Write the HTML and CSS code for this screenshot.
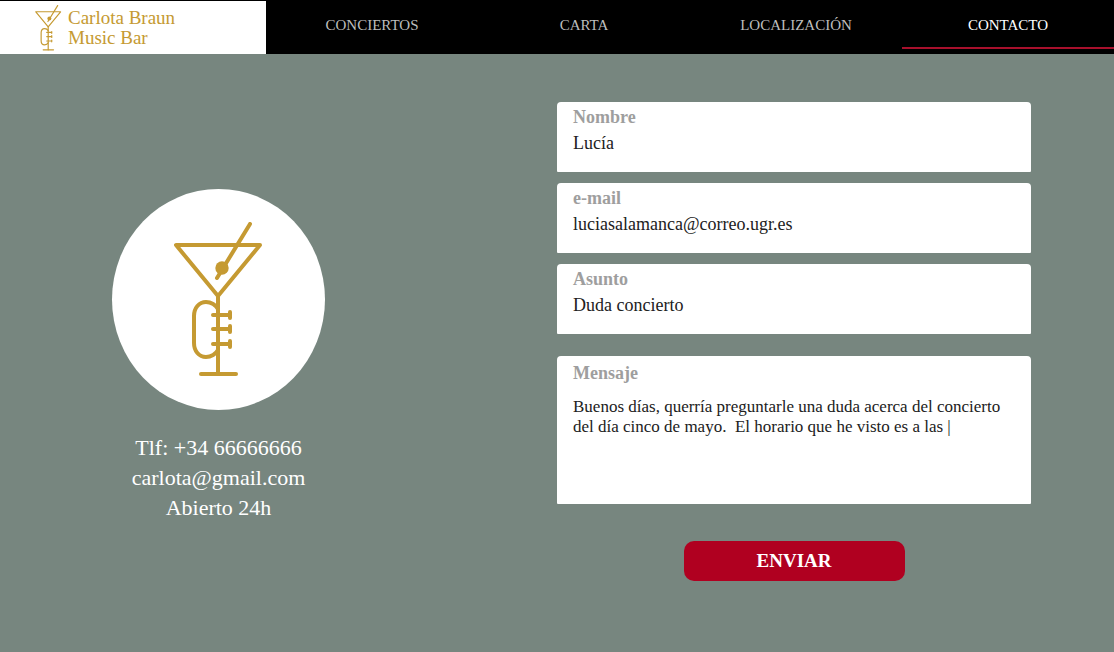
FILE: index.html
```html
<!DOCTYPE html>
<html lang="es">
<head>
<meta charset="utf-8">
<meta name="viewport" content="width=device-width, initial-scale=1">
<title>Carlota Braun Music Bar - Contacto</title>
<link rel="stylesheet" href="styles.css">
</head>
<body>
<svg class="sprite" aria-hidden="true">
  <symbol id="trumpet-glass" viewBox="0 0 90 156">
    <g fill="none" stroke="currentColor" stroke-width="4" stroke-linecap="round" stroke-linejoin="round">
      <path d="M2 23H86L44 74Z"/>
      <path d="M76 2L43 56"/>
      <path d="M44 74V152"/>
      <path d="M27 152H62"/>
      <path d="M44 87C42 83 37 80 32 80C25 80 20 86 20 94V121C20 129 25 135 32 135C37 135 42 132 44 128"/>
      <path d="M39 93H55M39 107H55M39 122H55"/>
      <path d="M56 90V96M56 104V110M56 119V125"/>
    </g>
    <circle cx="48" cy="46" r="6.700" fill="currentColor"/>
  </symbol>
</svg>
<header class="topbar">
  <a class="brand" href="#inicio">
    <svg class="brand-icon" aria-hidden="true"><use href="#trumpet-glass"/></svg>
    <span>Carlota Braun<br>Music Bar</span>
  </a>
  <nav class="tabs">
    <a class="tab" href="#conciertos">CONCIERTOS</a>
    <a class="tab" href="#carta">CARTA</a>
    <a class="tab" href="#localizacion">LOCALIZACIÓN</a>
    <a class="tab active" href="#contacto" aria-current="page">CONTACTO</a>
  </nav>
</header>
<main class="page">
  <section class="info">
    <div class="badge">
      <svg class="badge-icon" aria-hidden="true"><use href="#trumpet-glass"/></svg>
    </div>
    <address class="details">
      Tlf: +34 66666666<br>
      carlota@gmail.com<br>
      Abierto 24h
    </address>
  </section>
  <form class="form">
    <div class="field">
      <label for="nombre">Nombre</label>
      <input id="nombre" type="text" value="Lucía">
    </div>
    <div class="field">
      <label for="email">e-mail</label>
      <input id="email" type="email" value="luciasalamanca@correo.ugr.es">
    </div>
    <div class="field">
      <label for="asunto">Asunto</label>
      <input id="asunto" type="text" value="Duda concierto">
    </div>
    <div class="field message">
      <label for="mensaje">Mensaje</label>
      <textarea id="mensaje">Buenos días, querría preguntarle una duda acerca del concierto
del día cinco de mayo.  El horario que he visto es a las |</textarea>
    </div>
    <button class="send" type="submit">ENVIAR</button>
  </form>
</main>
</body>
</html>
```
FILE: styles.css
```css
* {
  box-sizing: border-box;
}

body {
  margin: 0;
  min-height: 100vh;
  background: #77867f;
  font-family: "Liberation Serif", "Times New Roman", serif;
}

.sprite {
  display: none;
}

.topbar {
  display: grid;
  grid-template-columns: 266fr 848fr;
  min-height: 54px;
  background: #000;
  border-top: 1px solid #000;
}

.brand {
  display: flex;
  align-items: center;
  gap: 6px;
  padding-left: 35px;
  background: #fff;
  color: #c59a32;
  font-size: 19px;
  line-height: 20px;
  text-decoration: none;
}

.brand-icon {
  width: 27px;
  height: 46px;
}

.tabs {
  display: grid;
  grid-template-columns: repeat(4, 1fr);
}

.tab {
  display: flex;
  align-items: center;
  justify-content: center;
  margin-bottom: 5px;
  padding-top: 2px;
  border-bottom: 2px solid transparent;
  color: #bdbdbd;
  font-size: 15px;
  text-decoration: none;
}

.tab.active {
  border-color: #a8102c;
  color: #fff;
}

.page {
  display: grid;
  grid-template-columns: 437fr 120fr 474fr 83fr;
}

.info {
  display: flex;
  flex-direction: column;
  align-items: center;
  gap: 23px;
  padding-top: 135px;
}

.badge {
  display: flex;
  align-items: center;
  justify-content: center;
  width: 213px;
  height: 221px;
  border-radius: 50%;
  background: #fff;
  color: #c59a32;
}

.badge-icon {
  width: 90px;
  height: 156px;
}

.details {
  color: #fff;
  font-size: 22px;
  font-style: normal;
  line-height: 30px;
  text-align: center;
}

.form {
  grid-column: 3;
  display: flex;
  flex-direction: column;
  gap: 11px;
  padding: 48px 0;
}

.field {
  display: flex;
  flex-direction: column;
  gap: 4px;
  padding: 5px 16px 17px;
  border-radius: 4px 4px 1px 1px;
  background: #fff;
}

.field label {
  color: #9e9e9e;
  font-size: 18px;
  font-weight: bold;
  line-height: 20px;
}

.field input,
.field textarea {
  width: 100%;
  padding: 0;
  border: 0;
  outline: 0;
  background: transparent;
  color: #212121;
  font: 18px/20px "Liberation Serif", "Times New Roman", serif;
}

.field input {
  height: 24px;
}

.field.message {
  gap: 14px;
  margin-top: 11px;
  padding: 7px 16px 15px;
}

.field textarea {
  height: 92px;
  overflow: hidden;
  resize: none;
  font-size: 17px;
  white-space: pre;
}

.send {
  align-self: center;
  width: 221px;
  height: 40px;
  margin-top: 26px;
  padding: 0;
  border: 0;
  border-radius: 10px;
  background: #b00020;
  color: #fff;
  font: bold 19px "Liberation Serif", "Times New Roman", serif;
}
```
